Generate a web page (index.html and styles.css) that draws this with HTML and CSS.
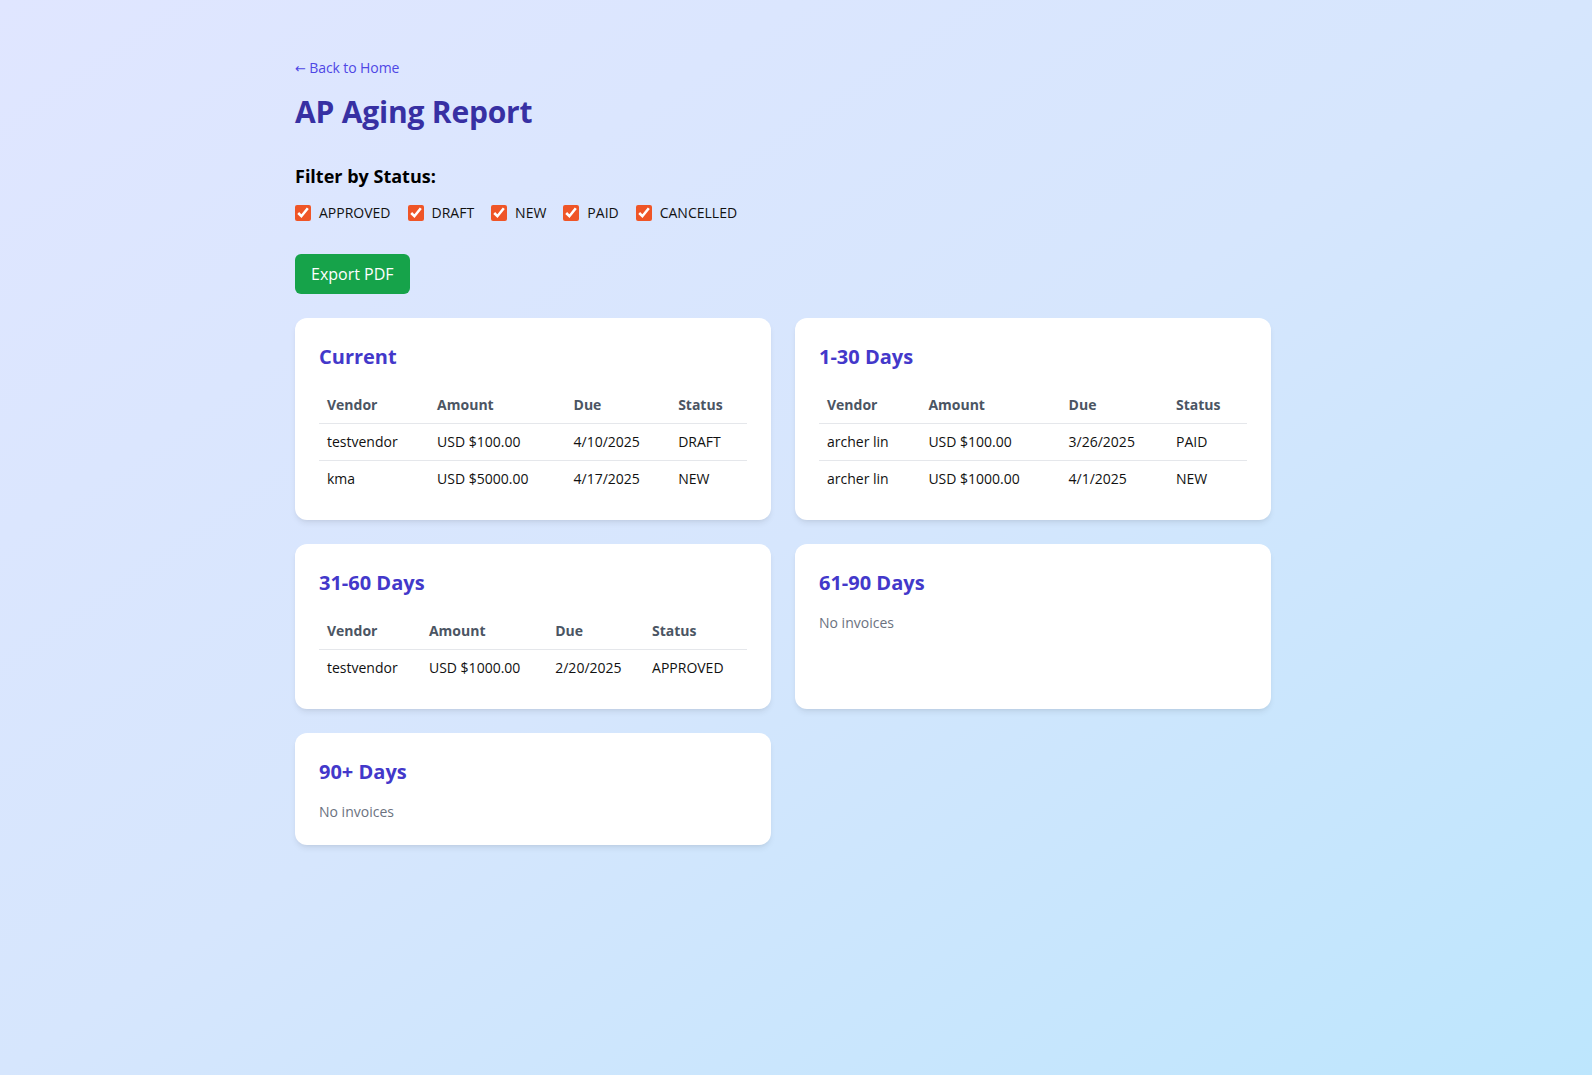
FILE: index.html
```html
<!DOCTYPE html>
<html lang="en">
<head>
<meta charset="utf-8">
<title>AP Aging Report</title>
<link rel="stylesheet" href="styles.css">
</head>
<body>
<div class="page">
  <a class="back" href="#"><span class="arrow">←</span> Back to Home</a>
  <h1 class="title">AP Aging Report</h1>

  <div class="filter">
    <h2 class="filter-label">Filter by Status:</h2>
    <div class="filter-row">
      <label class="opt"><input type="checkbox" checked><span>APPROVED</span></label>
      <label class="opt"><input type="checkbox" checked><span>DRAFT</span></label>
      <label class="opt"><input type="checkbox" checked><span>NEW</span></label>
      <label class="opt"><input type="checkbox" checked><span>PAID</span></label>
      <label class="opt"><input type="checkbox" checked><span>CANCELLED</span></label>
    </div>
  </div>

  <button class="export" type="button">Export PDF</button>

  <div class="grid">
    <section class="card">
      <h3 class="card-title">Current</h3>
      <table class="tbl">
        <thead><tr><th>Vendor</th><th>Amount</th><th>Due</th><th>Status</th></tr></thead>
        <tbody>
          <tr><td>testvendor</td><td>USD $100.00</td><td>4/10/2025</td><td>DRAFT</td></tr>
          <tr><td>kma</td><td>USD $5000.00</td><td>4/17/2025</td><td>NEW</td></tr>
        </tbody>
      </table>
    </section>

    <section class="card">
      <h3 class="card-title">1-30 Days</h3>
      <table class="tbl">
        <thead><tr><th>Vendor</th><th>Amount</th><th>Due</th><th>Status</th></tr></thead>
        <tbody>
          <tr><td>archer lin</td><td>USD $100.00</td><td>3/26/2025</td><td>PAID</td></tr>
          <tr><td>archer lin</td><td>USD $1000.00</td><td>4/1/2025</td><td>NEW</td></tr>
        </tbody>
      </table>
    </section>

    <section class="card">
      <h3 class="card-title">31-60 Days</h3>
      <table class="tbl">
        <thead><tr><th>Vendor</th><th>Amount</th><th>Due</th><th>Status</th></tr></thead>
        <tbody>
          <tr><td>testvendor</td><td>USD $1000.00</td><td>2/20/2025</td><td>APPROVED</td></tr>
        </tbody>
      </table>
    </section>

    <section class="card">
      <h3 class="card-title">61-90 Days</h3>
      <p class="empty">No invoices</p>
    </section>

    <section class="card">
      <h3 class="card-title">90+ Days</h3>
      <p class="empty">No invoices</p>
    </section>
  </div>
</div>
</body>
</html>
```

FILE: styles.css
```css
* { box-sizing: border-box; }

html, body {
  margin: 0;
  padding: 0;
}

body {
  min-height: 100vh;
  font-family: "Open Sans", "Noto Sans", sans-serif;
  color: #111827;
  background: linear-gradient(to bottom right, #e0e6ff 0%, #d6e6fd 50%, #bde6fd 100%);
}

.page {
  width: 976px;
  margin-left: 295px;
  padding-top: 58px;
  padding-bottom: 40px;
}

.back {
  display: block;
  width: max-content;
  height: 20px;
  font-size: 14px;
  line-height: 20px;
  color: #4f46e5;
  text-decoration: none;
  margin-bottom: 16px;
  letter-spacing: -0.1px;
}

.arrow {
  font-family: "DejaVu Sans", sans-serif;
  font-size: 13px;
  line-height: 1;
}

.title {
  margin: 0 0 32px;
  font-size: 30px;
  line-height: 36px;
  font-weight: 700;
  color: #3730a3;
  letter-spacing: -0.2px;
}

.filter-label {
  margin: 0 0 13px;
  font-size: 18px;
  line-height: 28px;
  font-weight: 700;
  color: #000;
}

.filter-row {
  display: flex;
  gap: 17px;
  align-items: center;
}

.opt {
  display: flex;
  align-items: center;
  gap: 8px;
  font-size: 14px;
  line-height: 20px;
  color: #111;
}

.opt input {
  width: 16px;
  height: 16px;
  margin: 0;
  accent-color: #ef5527;
}

.export {
  display: block;
  margin-top: 31px;
  margin-bottom: 24px;
  padding: 8px 16px;
  border: 0;
  border-radius: 6px;
  background: #16a34a;
  color: #fff;
  font-family: inherit;
  font-size: 16px;
  line-height: 24px;
}

.grid {
  display: grid;
  grid-template-columns: 1fr 1fr;
  gap: 24px;
}

.card {
  background: #fff;
  border-radius: 12px;
  padding: 25px 24px 23px;
  box-shadow: 0 4px 6px -1px rgba(0,0,0,0.08), 0 2px 4px -2px rgba(0,0,0,0.06);
}

.card-title {
  margin: 0 0 16px;
  font-size: 20px;
  line-height: 28px;
  font-weight: 700;
  color: #4338ca;
}

.tbl {
  width: 100%;
  border-collapse: collapse;
  font-size: 14px;
  line-height: 20px;
}

.tbl th {
  text-align: left;
  font-weight: 700;
  color: #4b5563;
  padding: 8px;
  border-bottom: 1px solid #e5e7eb;
}

.tbl td {
  padding: 8px;
  color: #111;
}

.tbl tbody tr + tr td {
  border-top: 1px solid #e5e7eb;
}

.empty {
  margin: 0;
  font-size: 14px;
  line-height: 20px;
  color: #6b7280;
}
```
